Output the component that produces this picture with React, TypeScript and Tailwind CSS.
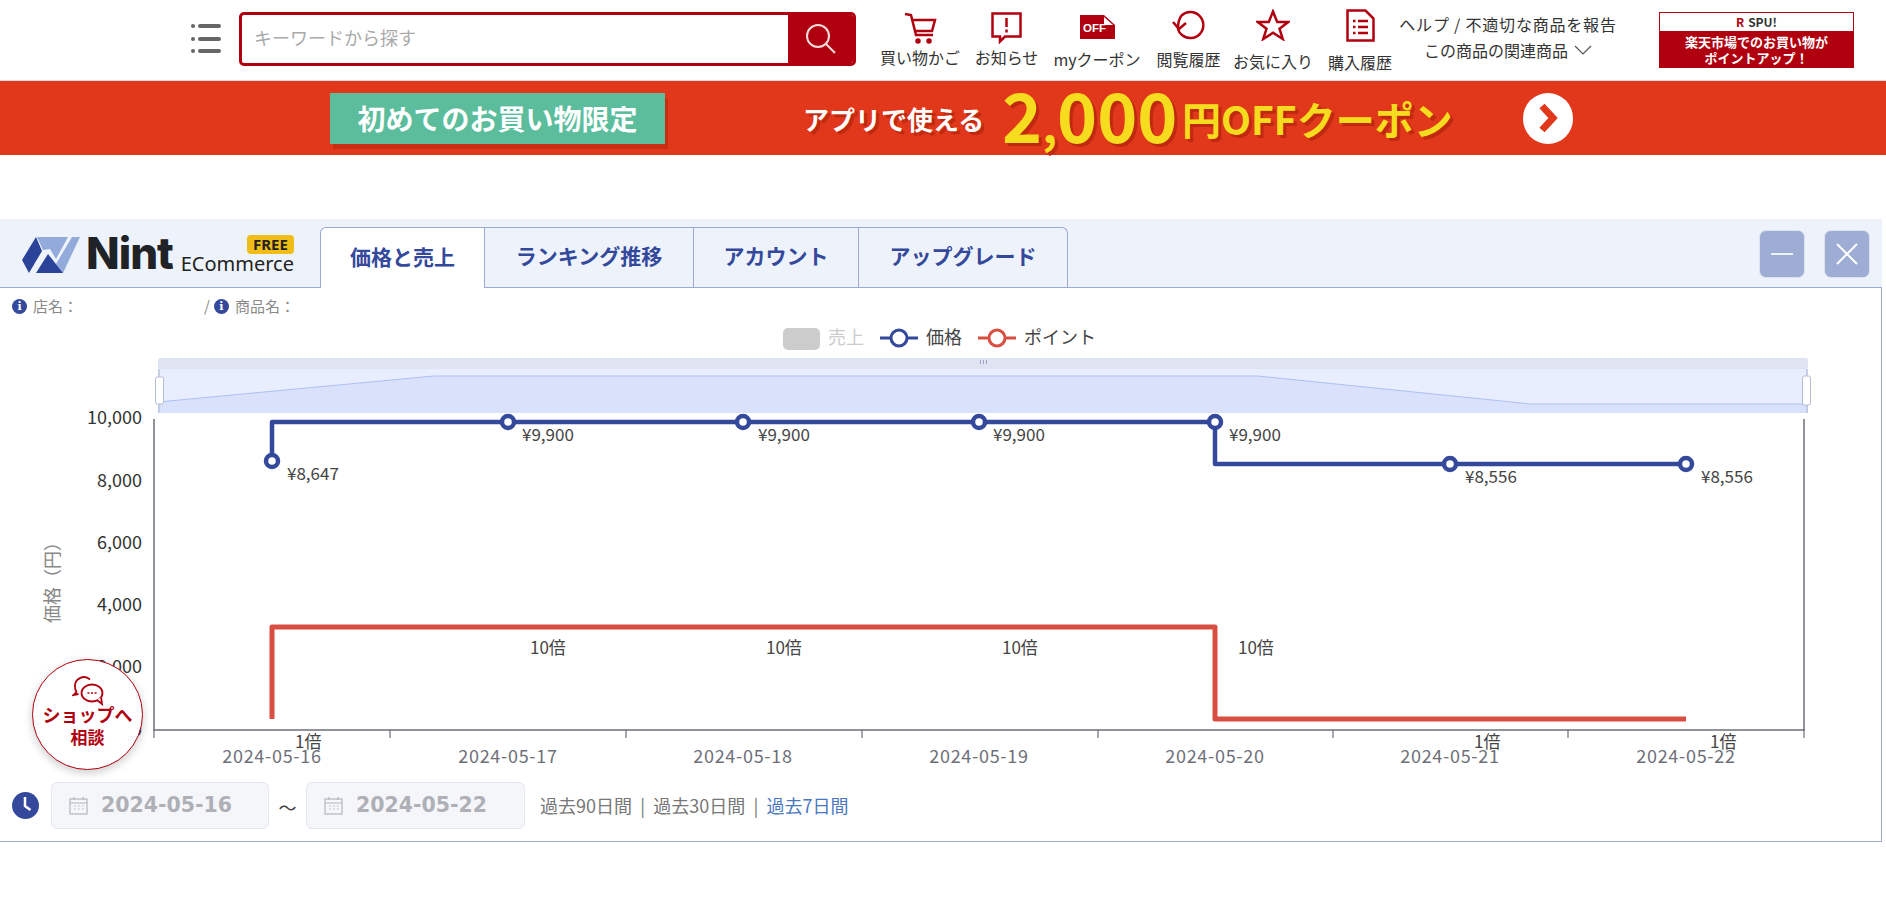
import React from 'react';

const RED = '#b0000f';
const points = [272, 508, 743, 979, 1215, 1450, 1686];
const dates = ['2024-05-16', '2024-05-17', '2024-05-18', '2024-05-19', '2024-05-20', '2024-05-21', '2024-05-22'];
const priceLabels = [
  { x: 287, y: 475, text: '¥8,647' },
  { x: 522, y: 436, text: '¥9,900' },
  { x: 758, y: 436, text: '¥9,900' },
  { x: 993, y: 436, text: '¥9,900' },
  { x: 1229, y: 436, text: '¥9,900' },
  { x: 1465, y: 478, text: '¥8,556' },
  { x: 1701, y: 478, text: '¥8,556' },
];
const pointLabels = [
  { x: 295, y: 742, text: '1倍' },
  { x: 530, y: 648, text: '10倍' },
  { x: 766, y: 648, text: '10倍' },
  { x: 1002, y: 648, text: '10倍' },
  { x: 1238, y: 648, text: '10倍' },
  { x: 1474, y: 742, text: '1倍' },
  { x: 1710, y: 742, text: '1倍' },
];
const yLabels = [
  { y: 418, text: '10,000' },
  { y: 481, text: '8,000' },
  { y: 543, text: '6,000' },
  { y: 605, text: '4,000' },
  { y: 667, text: '2,000' },
  { y: 730, text: '0' },
];
const ticks = [154, 390, 626, 862, 1098, 1333, 1568, 1804];

const NavItem = ({ label, className, labelClass, children }: { label: string; className: string; labelClass: string; children: React.ReactNode }) => (
  <div className={`flex flex-col items-center ${className}`}>
    {children}
    <span className={`whitespace-nowrap text-[16px] leading-[20px] text-[#333] ${labelClass}`}>{label}</span>
  </div>
);

const CalendarIcon = () => (
  <svg width="19" height="19" viewBox="0 0 19 19" fill="none" stroke="#b4b6bf" strokeWidth="1.2">
    <rect x="1" y="3" width="17" height="15" />
    <path d="M1 7h17M5 1v3M14 1v3" />
    <path d="M5 10h2M9 10h2M13 10h2M5 13h2M9 13h2M13 13h2" strokeDasharray="1.5 0.5" />
  </svg>
);

const InfoDot = () => (
  <span className="flex h-[15px] w-[15px] items-center justify-center rounded-full bg-[#34499b] text-[11px] font-bold leading-none text-white font-['DejaVu_Serif',serif]">i</span>
);

const DateBox = ({ value, className }: { value: string; className: string }) => (
  <div className={`flex h-[47px] items-center gap-[13px] rounded-[6px] border border-[#e4e7ef] bg-[#f5f6fa] pl-[17px] ${className}`}>
    <CalendarIcon />
    <span className="text-[20.500px] font-bold text-[#aeb0b6] font-['DejaVu_Sans',sans-serif]">{value}</span>
  </div>
);

const Chart = () => (
  <svg width="1882" height="455" viewBox="0 320 1882 455" className="block">
    {/* legend */}
    <rect x="783" y="328" width="37" height="22" rx="5" fill="#ccc" />
    <text x="828" y="344" className="fill-[#ccc] text-[18px]">売上</text>
    <path d="M880 338h38" stroke="#34499b" strokeWidth="3" />
    <circle cx="899" cy="338" r="8" fill="#fff" stroke="#34499b" strokeWidth="3" />
    <text x="926" y="344" className="fill-[#444] text-[18px]">価格</text>
    <path d="M978 338h38" stroke="#d94e43" strokeWidth="3" />
    <circle cx="997" cy="338" r="8" fill="#fff" stroke="#d94e43" strokeWidth="3" />
    <text x="1024" y="344" className="fill-[#444] text-[18px]">ポイント</text>

    {/* data zoom overview */}
    <rect x="158" y="358" width="1650" height="11" rx="2" fill="#e0e4f2" />
    <rect x="158" y="369" width="1650" height="44" fill="#e8eefd" />
    <path d="M158 402L434 376H1258L1531 404H1808V413H158Z" fill="#d9e1fb" />
    <path d="M158 402L434 376H1258L1531 404H1808" fill="none" stroke="#aebff5" strokeWidth="1" />
    <path d="M159 369v44M1807 369v44" stroke="#bcc5df" strokeWidth="1.5" />
    <rect x="155.500" y="377" width="8" height="27" rx="2" fill="#fff" stroke="#b4bdd8" />
    <rect x="1802.500" y="376" width="8" height="29" rx="2" fill="#fff" stroke="#b4bdd8" />
    <path d="M980.500 360v4M983.500 360v4M986.500 360v4" stroke="#9aa3c0" strokeWidth="1" />

    {/* axes */}
    <path d="M154 419V730M1804 419V730M153 730H1805" stroke="#6e7079" strokeWidth="1.500" fill="none" />
    {ticks.map(x => (
      <path key={x} d={`M${x} 730v8`} stroke="#6e7079" strokeWidth="1.200" />
    ))}
    {yLabels.map(l => (
      <text key={l.text} x="142" y={l.y + 6} textAnchor="end" className="fill-[#333] text-[18px]">{l.text}</text>
    ))}
    <text transform="translate(59 578) rotate(-90)" textAnchor="middle" className="fill-[#888] text-[18px]">価格（円）</text>
    {dates.map((d, i) => (
      <text key={d} x={points[i]} y="763" textAnchor="middle" className="fill-[#6e7079] text-[18px] tracking-[0.7px]">{d}</text>
    ))}

    {/* point series */}
    <path d="M272 719V627H1215V719H1686" fill="none" stroke="#d94e43" strokeWidth="5" strokeLinejoin="round" />
    {pointLabels.map(l => (
      <text key={l.x} x={l.x} y={l.y + 6} className="fill-[#444] text-[17px]">{l.text}</text>
    ))}

    {/* price series */}
    <path d="M272 461V422H1215V464H1686" fill="none" stroke="#34499b" strokeWidth="4.500" strokeLinejoin="round" />
    {[461, 422, 422, 422, 422, 464, 464].map((y, i) => (
      <circle key={points[i]} cx={points[i]} cy={y} r="6" fill="#fff" stroke="#34499b" strokeWidth="4.500" />
    ))}
    {priceLabels.map(l => (
      <text key={l.x} x={l.x} y={l.y + 5} className="fill-[#444] text-[17px]">{l.text}</text>
    ))}
  </svg>
);

export default function App() {
  return (
    <div className="relative h-[918px] w-[1886px] overflow-hidden bg-white font-['Noto_Sans_CJK_JP','Noto_Sans',sans-serif]">
      {/* top header */}
      <header className="flex h-[80px] items-start pl-[191px]">
        <div className="mt-[24px] flex w-[30px] flex-col gap-[8.500px]">
          {[0, 1, 2].map(i => (
            <div key={i} className="flex gap-[3px]">
              <span className="h-[4px] w-[4px] rounded-full bg-[#666]" />
              <span className="h-[4px] w-[23px] rounded-full bg-[#666]" />
            </div>
          ))}
        </div>
        <div className="ml-[18px] mt-[12px] flex h-[54px] w-[617px] overflow-hidden rounded-[5px] border-[3px] border-[#b0000f]">
          <div className="flex flex-1 items-center pb-[4px] pl-[12px] text-[18px] text-[#aaa]">キーワードから探す</div>
          <div className="flex w-[65px] items-center justify-center bg-[#b0000f]">
            <svg width="34" height="34" viewBox="0 0 34 34" fill="none" stroke="#f3dcdc" strokeWidth="2">
              <circle cx="14" cy="14" r="11" />
              <path d="M22 22l9 9" />
            </svg>
          </div>
        </div>

        <nav className="ml-[23px] flex items-start gap-[13px]">
          <NavItem label="買い物かご" className="w-[82px] pt-[12px]" labelClass="mt-[3px]">
            <svg width="33" height="32" viewBox="0 0 33 32" fill="none" stroke={RED} strokeWidth="2.500">
              <path d="M1 2l6 1 5 20h17" />
              <path d="M8 8h23l-3 11H11" />
              <circle cx="14" cy="29" r="1.500" fill={RED} />
              <circle cx="25" cy="29" r="1.500" fill={RED} />
            </svg>
          </NavItem>
          <NavItem label="お知らせ" className="w-[65px] pt-[12px]" labelClass="mt-[3px]">
            <svg width="31" height="32" viewBox="0 0 31 32" fill="none" stroke={RED} strokeWidth="2.500">
              <path d="M1.500 1.500h28v23H14l-5 5v-5H1.500z" />
              <path d="M15.500 6v9M15.500 17.500v3" />
            </svg>
          </NavItem>
          <NavItem label="myクーポン" className="w-[90px] pt-[15px]" labelClass="mt-[10px]">
            <svg width="35" height="24" viewBox="0 0 35 24">
              <path d="M0 0h24l11 10v14H0z" fill={RED} />
              <path d="M24 2v8h9z" fill="#fff" />
              <text x="3" y="17" className="fill-white text-[11.500px] font-bold font-['Liberation_Sans',sans-serif]">OFF</text>
            </svg>
          </NavItem>
          <NavItem label="閲覧履歴" className="ml-[1px] w-[65px] pt-[10px]" labelClass="mt-[9px]">
            <svg width="34" height="30" viewBox="0 0 34 30" fill="none" stroke={RED} strokeWidth="2.500">
              <path d="M9.500 5.500A13 13 0 1 1 10 25Q7 23 6 19Q6 10 9.500 5.500" />
              <path d="M1 12l6 7 7-6" />
            </svg>
          </NavItem>
          <NavItem label="お気に入り" className="-ml-[2px] w-[82px] pt-[9px]" labelClass="mt-[10px]">
            <svg width="34" height="32" viewBox="0 0 34 32" fill="none" stroke={RED} strokeWidth="2.500">
              <path d="M17 2.500l4.200 10.500h11L23.500 19.800l3.300 10.200L17 23.800 7.200 30l3.300-10.200L1.800 13h11z" />
            </svg>
          </NavItem>
          <NavItem label="購入履歴" className="w-[66px] pt-[9px]" labelClass="mt-[10px]">
            <svg width="29" height="33" viewBox="0 0 29 33" fill="none" stroke={RED} strokeWidth="2.500">
              <path d="M1.500 1.500h18l8 8v22h-26z" />
              <path d="M7 12h2.500M12 12h10M7 18h2.500M12 18h10M7 24h2.500M12 24h10" />
            </svg>
          </NavItem>
        </nav>

        <div className="ml-[7px] flex w-[216px] flex-col items-center pt-[13px] text-[16px] leading-[22px] text-[#333]">
          <span className="whitespace-nowrap tracking-[0.8px]">ヘルプ / 不適切な商品を報告</span>
          <span className="mt-[4px] flex items-center gap-[6px] whitespace-nowrap">
            この商品の関連商品
            <svg width="18" height="10" viewBox="0 0 18 10" fill="none" stroke="#555" strokeWidth="1.200">
              <path d="M1 1l8 8 8-8" />
            </svg>
          </span>
        </div>

        <div className="ml-[43px] mt-[12px] flex h-[56px] w-[195px] flex-col">
          <div className="flex h-[19px] items-center justify-center gap-[4px] border border-b-0 border-[#b0000f] bg-white text-[12px] font-bold leading-none text-[#333]">
            <span className="text-[#b0000f]">R</span>
            SPU!
          </div>
          <div className="flex flex-1 flex-col items-center justify-center bg-[#b0000f] text-[13px] font-bold leading-[16px] text-white">
            <span>楽天市場でのお買い物が</span>
            <span>ポイントアップ！</span>
          </div>
        </div>
      </header>

      {/* coupon banner */}
      <div className="flex h-[75px] items-center border-t border-[#ddd] bg-[#e1371a] pl-[330px]">
        <div className="flex h-[51px] w-[335px] items-center justify-center bg-[#5bbd9c] text-[28px] font-bold text-white shadow-[3px_5px_0_#c92d12]">
          初めてのお買い物限定
        </div>
        <div className="ml-[138px] flex items-center whitespace-nowrap font-bold [text-shadow:3px_3px_0_#c0280f]">
          <span className="w-[199px] text-[26px] text-white">アプリで使える</span>
          <span className="w-[180px] text-[68px] leading-[72px] text-[#f6dc1e]">
            2<span className="text-[46px]">,</span>000
          </span>
          <span className="text-[39px] leading-none text-[#f6dc1e]">円OFFクーポン</span>
        </div>
        <div className="ml-[70px] flex h-[51px] w-[50px] items-center justify-center rounded-full bg-white">
          <svg width="22" height="30" viewBox="0 0 22 30" fill="none" stroke="#e1371a" strokeWidth="7">
            <path d="M5 3l11 12L5 27" />
          </svg>
        </div>
      </div>

      {/* price panel */}
      <section className="mt-[64px] w-[1882px]">
        <div className="flex h-[69px] items-end border-b border-[#9aa9d6] bg-[#eef3fb] pr-[12px]">
          <div className="flex h-full w-[320px] items-center pl-[22px] pr-[26px]">
            <svg width="58" height="36" viewBox="0 0 58 36" className="mt-[3px]">
              <path d="M14 0L20 14 7 36 0 23z" fill="#2a4298" />
              <path d="M15 0H46L34 22 28 12 21 13z" fill="#93abdb" />
              <path d="M50 0H58L41 36 34 27z" fill="#93abdb" />
              <path d="M26 17L41 36H14z" fill="#2a4298" />
            </svg>
            <span className="ml-[6px] text-[44px] font-extrabold leading-none tracking-[-1px] text-[#1f2226] font-['Inter',sans-serif]">Nint</span>
            <div className="ml-auto mt-[2px] flex w-[116px] flex-col items-end">
              <span className="flex h-[19px] w-[47px] items-center justify-center rounded-[4px] bg-[#f0bc17] text-[15px] font-bold leading-none text-[#222] font-['Noto_Sans',sans-serif]">FREE</span>
              <span className="whitespace-nowrap text-[20px] leading-[20px] text-[#222] font-['Noto_Sans',sans-serif]">ECommerce</span>
            </div>
          </div>
          <div className="-mb-px flex h-[61px] w-[165px] items-center justify-center rounded-tl-[6px] border border-b-0 border-[#9aa9d6] bg-white pb-[3px] text-[21px] font-bold text-[#34499b]">価格と売上</div>
          <div className="flex h-[60px] w-[209px] items-center justify-center border-t border-r border-[#9aa9d6] pb-[3px] text-[21px] font-bold text-[#34499b]">ランキング推移</div>
          <div className="flex h-[60px] w-[165px] items-center justify-center border-t border-r border-[#9aa9d6] pb-[3px] text-[21px] font-bold text-[#34499b]">アカウント</div>
          <div className="flex h-[60px] w-[209px] items-center justify-center rounded-tr-[6px] border-t border-r border-[#9aa9d6] pb-[3px] text-[21px] font-bold text-[#34499b]">アップグレード</div>
          <div className="mb-[9px] ml-auto flex gap-[19px]">
            <button className="flex h-[48px] w-[46px] items-center justify-center rounded-[7px] border border-[#dde3f0] bg-[#9eadd4]">
              <span className="h-[2.500px] w-[22px] bg-[#eef3fb]" />
            </button>
            <button className="flex h-[48px] w-[46px] items-center justify-center rounded-[7px] border border-[#dde3f0] bg-[#9eadd4]">
              <svg width="24" height="24" viewBox="0 0 24 24" stroke="#fff" strokeWidth="2">
                <path d="M2 2l20 20M22 2L2 22" />
              </svg>
            </button>
          </div>
        </div>

        <div className="h-[554px] border-r border-b border-[#9aa9d6]">
          <div className="flex h-[32px] items-center pl-[12px] pt-[4px] text-[15px] text-[#888]">
            <InfoDot />
            <span className="ml-[6px] w-[171px]">店名：</span>
            <span className="mr-[4px]">/</span>
            <InfoDot />
            <span className="ml-[6px]">商品名：</span>
          </div>
          <Chart />
          <div className="mt-[7px] flex items-center pl-[12px]">
            <svg width="27" height="27" viewBox="0 0 27 27">
              <circle cx="13.500" cy="13.500" r="13.500" fill="#34499b" />
              <path d="M13 5v9l5.500 4" fill="none" stroke="#fff" strokeWidth="2.500" />
            </svg>
            <DateBox value="2024-05-16" className="ml-[12px] w-[218px]" />
            <span className="w-[37px] pt-[4px] text-center text-[18px] text-[#444]">〜</span>
            <DateBox value="2024-05-22" className="w-[219px]" />
            <div className="ml-[15px] flex items-center gap-[8.200px] text-[18px] text-[#777]">
              <span>過去90日間</span>
              <span>|</span>
              <span>過去30日間</span>
              <span>|</span>
              <span className="text-[#4a78c0]">過去7日間</span>
            </div>
          </div>
        </div>
      </section>

      {/* floating consult button */}
      <div className="absolute left-[32px] top-[659px] flex h-[111px] w-[111px] flex-col items-center rounded-full border-[1.500px] border-[#b0000f] bg-white pt-[16px] shadow-[0_3px_8px_rgba(0,0,0,0.2)]">
        <svg width="32" height="30" viewBox="0 0 32 30" fill="none" stroke={RED} strokeWidth="1.800">
          <path d="M18 3.500A9 9 0 0 0 3 11c0 2 .5 3.500 1.500 5L1.500 19l5-1" />
          <ellipse cx="20" cy="17" rx="10.500" ry="8.500" fill="#fff" />
          <path d="M25 24l5 4-1-7" fill="#fff" />
          <path d="M15.500 17h2M19 17h2M22.500 17h2" strokeWidth="1.500" />
        </svg>
        <span className="-mt-[4px] whitespace-nowrap text-[18px] font-bold leading-[24px] text-[#b0000f]">ショップへ</span>
        <span className="text-[17px] font-bold leading-[22px] text-[#b0000f]">相談</span>
      </div>
    </div>
  );
}
